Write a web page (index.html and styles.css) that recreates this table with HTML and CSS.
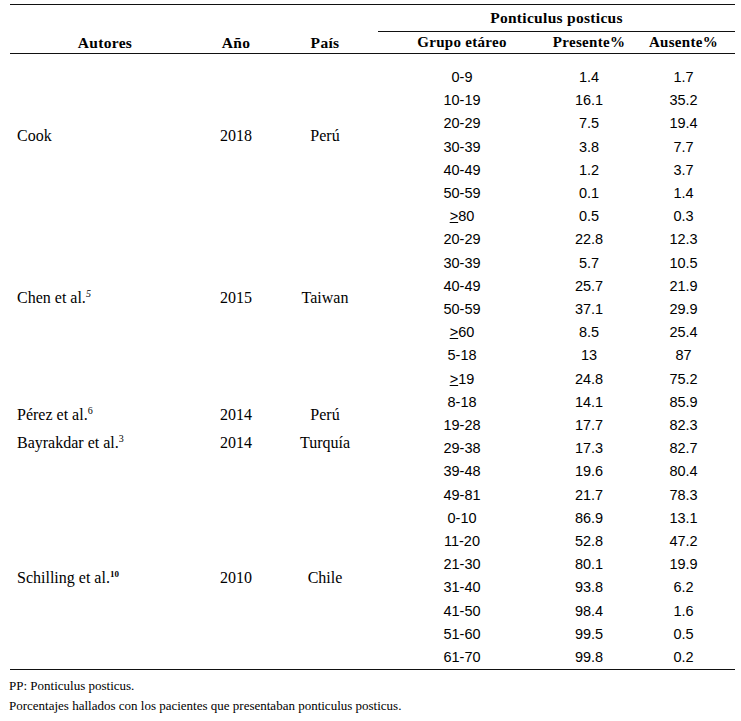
FILE: index.html
```html
<!DOCTYPE html>
<html lang="es">
<head>
<meta charset="utf-8">
<title>Ponticulus posticus</title>
<link rel="stylesheet" href="styles.css">
</head>
<body>
<div class="page">
  <table class="data">
    <colgroup>
      <col class="c-aut"><col class="c-ano"><col class="c-pais"><col class="c-grupo"><col class="c-pres"><col class="c-aus">
    </colgroup>
    <thead>
      <tr class="h1">
        <th rowspan="2" class="hb">Autores</th>
        <th rowspan="2" class="hb">Año</th>
        <th rowspan="2" class="hb">País</th>
        <th colspan="3" class="group">Ponticulus posticus</th>
      </tr>
      <tr class="h2">
        <th>Grupo etáreo</th>
        <th>Presente%</th>
        <th>Ausente%</th>
      </tr>
    </thead>
    <tbody>
      <tr class="first">
        <td rowspan="7" class="aut g-cook">Cook</td><td rowspan="7" class="yr g-cook">2018</td><td rowspan="7" class="ct g-cook">Perú</td>
        <td class="n">0-9</td><td class="n">1.4</td><td class="n">1.7</td>
      </tr>
      <tr><td class="n">10-19</td><td class="n">16.1</td><td class="n">35.2</td></tr>
      <tr><td class="n">20-29</td><td class="n">7.5</td><td class="n">19.4</td></tr>
      <tr><td class="n">30-39</td><td class="n">3.8</td><td class="n">7.7</td></tr>
      <tr><td class="n">40-49</td><td class="n">1.2</td><td class="n">3.7</td></tr>
      <tr><td class="n">50-59</td><td class="n">0.1</td><td class="n">1.4</td></tr>
      <tr><td class="n"><span class="ge">&gt;</span>80</td><td class="n">0.5</td><td class="n">0.3</td></tr>
      <tr>
        <td rowspan="7" class="aut g-chen">Chen et al.<sup class="it">5</sup></td><td rowspan="7" class="yr g-chen">2015</td><td rowspan="7" class="ct g-chen">Taiwan</td>
        <td class="n">20-29</td><td class="n">22.8</td><td class="n">12.3</td>
      </tr>
      <tr><td class="n">30-39</td><td class="n">5.7</td><td class="n">10.5</td></tr>
      <tr><td class="n">40-49</td><td class="n">25.7</td><td class="n">21.9</td></tr>
      <tr><td class="n">50-59</td><td class="n">37.1</td><td class="n">29.9</td></tr>
      <tr><td class="n"><span class="ge">&gt;</span>60</td><td class="n">8.5</td><td class="n">25.4</td></tr>
      <tr><td class="n">5-18</td><td class="n">13</td><td class="n">87</td></tr>
      <tr><td class="n"><span class="ge">&gt;</span>19</td><td class="n">24.8</td><td class="n">75.2</td></tr>
      <tr>
        <td rowspan="2" class="aut g-perez">Pérez et al.<sup>6</sup></td><td rowspan="2" class="yr g-perez">2014</td><td rowspan="2" class="ct g-perez">Perú</td>
        <td class="n">8-18</td><td class="n">14.1</td><td class="n">85.9</td>
      </tr>
      <tr><td class="n">19-28</td><td class="n">17.7</td><td class="n">82.3</td></tr>
      <tr>
        <td rowspan="3" class="aut g-bayr">Bayrakdar et al.<sup>3</sup></td><td rowspan="3" class="yr g-bayr">2014</td><td rowspan="3" class="ct g-bayr">Turquía</td>
        <td class="n">29-38</td><td class="n">17.3</td><td class="n">82.7</td>
      </tr>
      <tr><td class="n">39-48</td><td class="n">19.6</td><td class="n">80.4</td></tr>
      <tr><td class="n">49-81</td><td class="n">21.7</td><td class="n">78.3</td></tr>
      <tr>
        <td rowspan="7" class="aut g-schil">Schilling et al.<sup class="bd">10</sup></td><td rowspan="7" class="yr g-schil">2010</td><td rowspan="7" class="ct g-schil">Chile</td>
        <td class="n">0-10</td><td class="n">86.9</td><td class="n">13.1</td>
      </tr>
      <tr><td class="n">11-20</td><td class="n">52.8</td><td class="n">47.2</td></tr>
      <tr><td class="n">21-30</td><td class="n">80.1</td><td class="n">19.9</td></tr>
      <tr><td class="n">31-40</td><td class="n">93.8</td><td class="n">6.2</td></tr>
      <tr><td class="n">41-50</td><td class="n">98.4</td><td class="n">1.6</td></tr>
      <tr><td class="n">51-60</td><td class="n">99.5</td><td class="n">0.5</td></tr>
      <tr><td class="n">61-70</td><td class="n">99.8</td><td class="n">0.2</td></tr>
    </tbody>
  </table>
  <p class="note first-note">PP: Ponticulus posticus.</p>
  <p class="note">Porcentajes hallados con los pacientes que presentaban ponticulus posticus.</p>
</div>
</body>
</html>
```

FILE: styles.css
```css
html, body {
  margin: 0;
  padding: 0;
  background: #ffffff;
  color: #000000;
}

.page {
  padding: 4px 6px 0 10px;
  font-family: "Liberation Serif", "Times New Roman", serif;
}

.data {
  border-collapse: collapse;
  table-layout: fixed;
  width: 725px;
  border-top: 1px solid #111;
  border-bottom: 1px solid #111;
}

.c-aut { width: 190px; }
.c-ano { width: 72px; }
.c-pais { width: 106px; }
.c-grupo { width: 168px; }
.c-pres { width: 86px; }
.c-aus { width: 103px; }

th {
  font-family: "Liberation Serif", "Times New Roman", serif;
  font-weight: bold;
  font-size: 15px;
  padding: 0;
  text-align: center;
  letter-spacing: 0.3px;
}

.h1 th.group {
  height: 26px;
  line-height: 26px;
  border-bottom: 1px solid #111;
  font-size: 15.5px;
}

.h1 th.hb {
  vertical-align: bottom;
  line-height: 21px;
  font-size: 15.5px;
}

.h2 th {
  height: 21px;
  line-height: 21px;
}

thead {
  border-bottom: 1px solid #111;
}

td {
  padding: 0;
  height: 23.2px;
  line-height: 23.2px;
  white-space: nowrap;
}

td.aut, td.yr, td.ct {
  font-family: "Liberation Serif", "Times New Roman", serif;
  font-size: 16px;
  vertical-align: top;
}

td.aut {
  text-align: left;
  padding-left: 7px;
}

td.yr, td.ct {
  text-align: center;
}

td.g-cook { padding-top: 70px; }
td.g-chen { padding-top: 58px; }
td.g-perez { padding-top: 12px; }
td.g-bayr { padding-top: 0; line-height: 11px; }
td.g-schil { padding-top: 59px; }

td.n {
  font-family: "Liberation Sans", Arial, sans-serif;
  font-size: 14.5px;
  text-align: center;
  vertical-align: middle;
}

.first td.n {
  padding-top: 12px;
  vertical-align: bottom;
}

sup {
  font-size: 10px;
  line-height: 0;
  vertical-align: 6px;
}

sup.it {
  font-style: italic;
}

sup.bd {
  font-weight: bold;
  font-size: 9px;
}

.ge {
  text-decoration: underline;
  text-underline-offset: 1px;
}

.note {
  margin: 0;
  margin-left: -1px;
  font-family: "Liberation Serif", "Times New Roman", serif;
  font-size: 13px;
  line-height: 20px;
}

.first-note {
  margin-top: 6px;
}
```
